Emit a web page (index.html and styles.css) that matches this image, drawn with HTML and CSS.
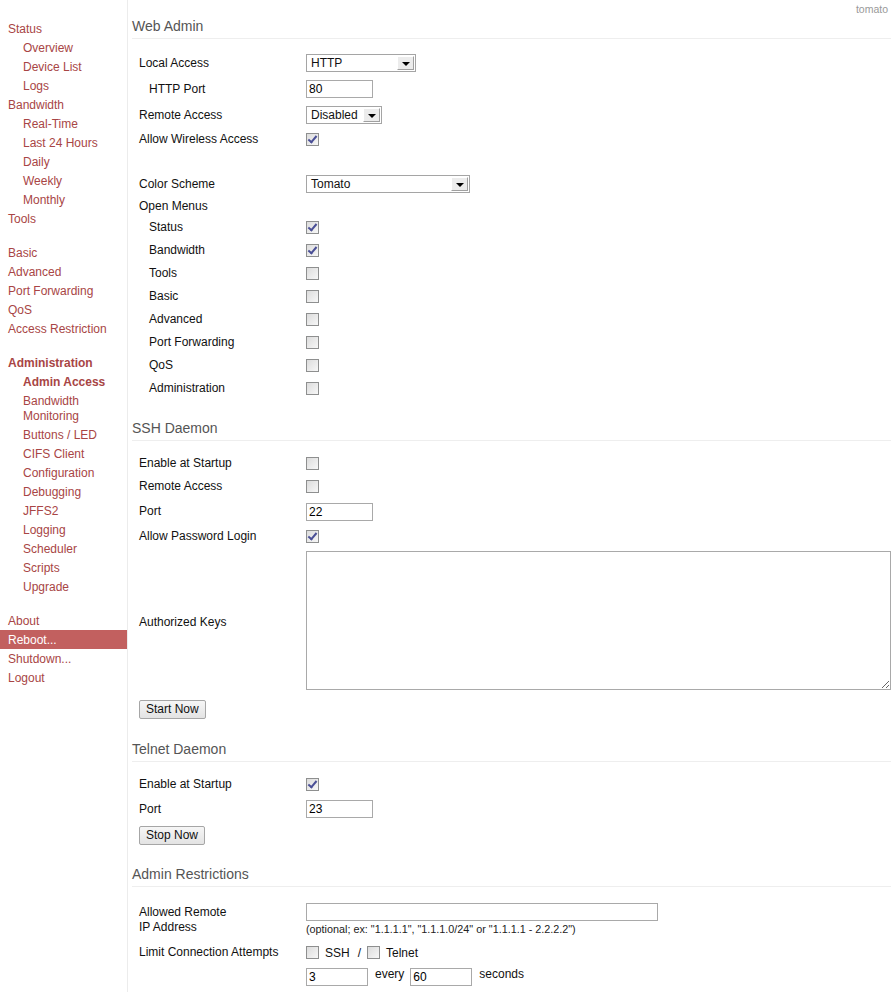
FILE: index.html
```html
<!DOCTYPE html>
<html lang="en">
<head>
    <meta charset="UTF-8">
    <title>Admin Access - Tomato</title>
    <link rel="stylesheet" href="styles.css">
</head>
<body>
    <div class="page">
        <div class="sidebar">
            <div class="nav-group">
                <a class="nav-item">Status</a>
                <a class="nav-item sub">Overview</a>
                <a class="nav-item sub">Device List</a>
                <a class="nav-item sub">Logs</a>
                <a class="nav-item">Bandwidth</a>
                <a class="nav-item sub">Real-Time</a>
                <a class="nav-item sub">Last 24 Hours</a>
                <a class="nav-item sub">Daily</a>
                <a class="nav-item sub">Weekly</a>
                <a class="nav-item sub">Monthly</a>
                <a class="nav-item">Tools</a>
            </div>
            <div class="nav-group">
                <a class="nav-item">Basic</a>
                <a class="nav-item">Advanced</a>
                <a class="nav-item">Port Forwarding</a>
                <a class="nav-item">QoS</a>
                <a class="nav-item">Access Restriction</a>
            </div>
            <div class="nav-group">
                <a class="nav-item active">Administration</a>
                <a class="nav-item sub active">Admin Access</a>
                <a class="nav-item sub">Bandwidth<br>Monitoring</a>
                <a class="nav-item sub">Buttons / LED</a>
                <a class="nav-item sub">CIFS Client</a>
                <a class="nav-item sub">Configuration</a>
                <a class="nav-item sub">Debugging</a>
                <a class="nav-item sub">JFFS2</a>
                <a class="nav-item sub">Logging</a>
                <a class="nav-item sub">Scheduler</a>
                <a class="nav-item sub">Scripts</a>
                <a class="nav-item sub">Upgrade</a>
            </div>
            <div class="nav-group">
                <a class="nav-item">About</a>
                <a class="nav-item hot">Reboot...</a>
                <a class="nav-item">Shutdown...</a>
                <a class="nav-item">Logout</a>
            </div>
        </div>

        <div class="content">
            <div class="router-name">tomato</div>

            <!-- Web Admin -->
            <div class="section-title first">Web Admin</div>
            <div class="form-row tall">
                <div class="label">Local Access</div>
                <div class="field">
                    <span class="select w-http"><span class="select-text">HTTP</span><span class="select-arrow"></span></span>
                </div>
            </div>
            <div class="form-row tall">
                <div class="label indent">HTTP Port</div>
                <div class="field"><input class="text w-port" type="text" value="80"></div>
            </div>
            <div class="form-row tall">
                <div class="label">Remote Access</div>
                <div class="field">
                    <span class="select w-remote"><span class="select-text">Disabled</span><span class="select-arrow"></span></span>
                </div>
            </div>
            <div class="form-row">
                <div class="label">Allow Wireless Access</div>
                <div class="field"><span class="cb on"></span></div>
            </div>
            <div class="spacer"></div>
            <div class="form-row tall">
                <div class="label">Color Scheme</div>
                <div class="field">
                    <span class="select w-scheme"><span class="select-text">Tomato</span><span class="select-arrow"></span></span>
                </div>
            </div>
            <div class="form-row short">
                <div class="label">Open Menus</div>
            </div>
            <div class="form-row">
                <div class="label indent">Status</div>
                <div class="field"><span class="cb on"></span></div>
            </div>
            <div class="form-row">
                <div class="label indent">Bandwidth</div>
                <div class="field"><span class="cb on"></span></div>
            </div>
            <div class="form-row">
                <div class="label indent">Tools</div>
                <div class="field"><span class="cb"></span></div>
            </div>
            <div class="form-row">
                <div class="label indent">Basic</div>
                <div class="field"><span class="cb"></span></div>
            </div>
            <div class="form-row">
                <div class="label indent">Advanced</div>
                <div class="field"><span class="cb"></span></div>
            </div>
            <div class="form-row">
                <div class="label indent">Port Forwarding</div>
                <div class="field"><span class="cb"></span></div>
            </div>
            <div class="form-row">
                <div class="label indent">QoS</div>
                <div class="field"><span class="cb"></span></div>
            </div>
            <div class="form-row">
                <div class="label indent">Administration</div>
                <div class="field"><span class="cb"></span></div>
            </div>

            <!-- SSH -->
            <div class="section-title ssh">SSH Daemon</div>
            <div class="form-row">
                <div class="label">Enable at Startup</div>
                <div class="field"><span class="cb"></span></div>
            </div>
            <div class="form-row">
                <div class="label">Remote Access</div>
                <div class="field"><span class="cb"></span></div>
            </div>
            <div class="form-row taller">
                <div class="label">Port</div>
                <div class="field"><input class="text w-port" type="text" value="22"></div>
            </div>
            <div class="form-row">
                <div class="label">Allow Password Login</div>
                <div class="field"><span class="cb on"></span></div>
            </div>
            <div class="form-row keys">
                <div class="label">Authorized Keys</div>
                <div class="field"><textarea class="keys-box"></textarea></div>
            </div>
            <div class="button-row"><button class="btn">Start Now</button></div>

            <!-- Telnet -->
            <div class="section-title">Telnet Daemon</div>
            <div class="form-row">
                <div class="label">Enable at Startup</div>
                <div class="field"><span class="cb on"></span></div>
            </div>
            <div class="form-row tall">
                <div class="label">Port</div>
                <div class="field"><input class="text w-port" type="text" value="23"></div>
            </div>
            <div class="button-row"><button class="btn">Stop Now</button></div>

            <!-- Restrictions -->
            <div class="section-title restrict">Admin Restrictions</div>
            <div class="form-row ip-row">
                <div class="label">Allowed Remote<br>IP Address</div>
                <div class="field stack">
                    <input class="text w-ip" type="text" value="">
                    <div class="hint">(optional; ex: "1.1.1.1", "1.1.1.0/24" or "1.1.1.1 - 2.2.2.2")</div>
                </div>
            </div>
            <div class="form-row">
                <div class="label">Limit Connection Attempts</div>
                <div class="field">
                    <span class="cb"></span><span class="inline-text">SSH</span>
                    <span class="slash">/</span>
                    <span class="cb"></span><span class="inline-text">Telnet</span>
                </div>
            </div>
            <div class="form-row tall">
                <div class="label"></div>
                <div class="field">
                    <input class="text w-small" type="text" value="3">
                    <span class="word">every</span>
                    <input class="text w-small" type="text" value="60">
                    <span class="word">seconds</span>
                </div>
            </div>
        </div>
    </div>
</body>
</html>
```

FILE: styles.css
```css
body {
    font-family: 'Liberation Sans', Arial, sans-serif;
    font-size: 12px;
    margin: 0;
    padding: 0;
    background: #fff;
    color: #111;
}

.page {
    display: flex;
    min-height: 992px;
}

/* sidebar */
.sidebar {
    width: 127px;
    flex-shrink: 0;
    border-right: 1px solid #ececec;
    padding-top: 19px;
}

.nav-group {
    margin-bottom: 15px;
}

.nav-item {
    display: block;
    padding: 3px 0 1px 8px;
    line-height: 15px;
    color: #a84545;
    white-space: nowrap;
}

.nav-item.sub {
    padding-left: 23px;
}

.nav-item.active {
    font-weight: bold;
}

.nav-item.hot {
    background: #c2605f;
    color: #fff;
}

/* content */
.content {
    flex: 1;
    padding-left: 4px;
}

.router-name {
    height: 15px;
    padding-top: 2px;
    line-height: 15px;
    text-align: right;
    padding-right: 3px;
    font-size: 10.5px;
    color: #999;
}

.section-title {
    font-size: 14px;
    line-height: 18px;
    color: #555;
    padding-bottom: 3px;
    border-bottom: 1px solid #eee;
    margin: 18px 0 11px;
}

.section-title.first {
    margin-top: 0;
}

.section-title.ssh {
    margin-top: 19px;
}

.section-title.restrict {
    margin-top: 17px;
}

.form-row {
    display: flex;
    align-items: center;
    height: 23px;
    padding-left: 7px;
}

.form-row.tall {
    height: 26px;
}

.form-row.taller {
    height: 27px;
}

.form-row.short {
    height: 19px;
}

.spacer {
    height: 20px;
}

.label {
    width: 167px;
    flex-shrink: 0;
    line-height: 15px;
}

.label.indent {
    padding-left: 10px;
    width: 157px;
}

.field {
    flex: 1;
    display: flex;
    align-items: center;
}

/* inputs */
.text {
    box-sizing: border-box;
    height: 18px;
    border: 1px solid #a9a9a9;
    padding: 0 2px;
    font-family: inherit;
    font-size: 12px;
    color: #000;
    margin: 0;
}

.w-port { width: 67px; }
.w-ip { width: 352px; }
.w-small { width: 62px; }

.select {
    box-sizing: border-box;
    display: flex;
    height: 18px;
    border: 1px solid #a5a5a5;
    background: #fff;
}

.select-text {
    flex: 1;
    padding-left: 4px;
    line-height: 16px;
}

.select-arrow {
    position: relative;
    width: 15px;
    margin: 1px;
    background: #ececec;
    border: 1px solid #fff;
    border-right-color: #a0a0a0;
    border-bottom-color: #a0a0a0;
}

.select-arrow::after {
    content: '';
    position: absolute;
    left: 4px;
    top: 5px;
    border-left: 4px solid transparent;
    border-right: 4px solid transparent;
    border-top: 4px solid #000;
}

.w-http { width: 110px; }
.w-remote { width: 76px; }
.w-scheme { width: 164px; }

.cb {
    position: relative;
    box-sizing: border-box;
    display: inline-block;
    width: 13px;
    height: 13px;
    border: 1px solid #8e8f8f;
    background: linear-gradient(135deg, #dcdcdc, #f7f7f7);
}

.cb.on::after {
    content: '';
    position: absolute;
    left: 3px;
    top: 0px;
    width: 3px;
    height: 7px;
    border-right: 2px solid #4a4f96;
    border-bottom: 2px solid #4a4f96;
    transform: rotate(40deg);
}

.keys {
    height: auto;
    padding-top: 3px;
    padding-bottom: 6px;
}

.keys .label {
    padding-top: 4px;
}

.keys-box {
    box-sizing: border-box;
    width: 100%;
    height: 139px;
    border: 1px solid #a9a9a9;
    margin: 0;
    display: block;
}

.button-row {
    height: 26px;
    display: flex;
    align-items: center;
    padding-left: 7px;
}

.btn {
    height: 19px;
    padding: 0 6px;
    font-family: inherit;
    font-size: 12px;
    color: #111;
    background: linear-gradient(#f6f6f6, #e3e3e3);
    border: 1px solid #a6a6a6;
    border-radius: 2px;
}

.ip-row {
    height: 43px;
    align-items: flex-start;
}

.ip-row .label {
    padding-top: 7px;
}

.field.stack {
    flex-direction: column;
    align-items: flex-start;
    padding-top: 5px;
}

.hint {
    font-size: 10.8px;
    line-height: 13px;
    padding-top: 2px;
    color: #222;
}

.inline-text {
    margin-left: 6px;
}

.slash {
    margin: 0 6px 0 8px;
}

.word {
    margin: -6px 6px 0 7px;
}
```
